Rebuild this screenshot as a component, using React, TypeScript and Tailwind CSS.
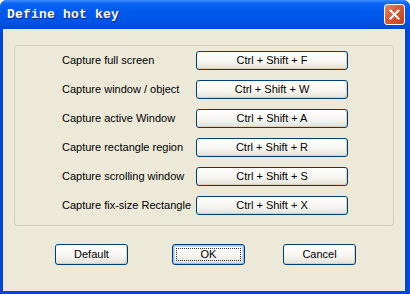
import React from "react";

const rows = [
  ["Capture full screen", "Ctrl + Shift + F"],
  ["Capture window / object", "Ctrl + Shift + W"],
  ["Capture active Window", "Ctrl + Shift + A"],
  ["Capture rectangle region", "Ctrl + Shift + R"],
  ["Capture scrolling window", "Ctrl + Shift + S"],
  ["Capture fix-size Rectangle", "Ctrl + Shift + X"],
];

// XP-style push button
function XpButton({
  children,
  className = "",
  focused = false,
}: {
  children: React.ReactNode;
  className?: string;
  focused?: boolean;
}) {
  return (
    <button
      type="button"
      className={`relative flex items-center justify-center rounded-[3px] border border-[#003C74] bg-[linear-gradient(180deg,#ffffff_0%,#f5f4ef_60%,#e3e1d6_100%)] text-black ${
        focused ? "shadow-[inset_0_0_0_1px_#9dbbef,inset_0_0_0_2px_#c8dbf8]" : "shadow-[inset_-1px_-1px_0_#d6d0c0]"
      } ${className}`}
    >
      {focused && (
        <span className="pointer-events-none absolute inset-[3px] border border-dotted border-[#333]" />
      )}
      {children}
    </button>
  );
}

export default function App() {
  return (
    <div
      className="flex h-[294px] w-[410px] flex-col overflow-hidden rounded-t-[7px] bg-[#0047d8]"
      style={{ fontFamily: '"Liberation Sans", Arial, sans-serif' }}
    >
      {/* title bar */}
      <div className="flex h-[29px] shrink-0 items-center justify-between bg-[linear-gradient(180deg,#3b8cff_0%,#0a64f4_12%,#0058ee_40%,#0055e8_70%,#0048d6_100%)] pl-[7px] pr-[5px]">
        <span
          className="text-[13px] font-bold tracking-[0.2px] text-white [text-shadow:1px_1px_0_#0b2a88]"
          style={{ fontFamily: '"Liberation Mono", "Courier New", monospace' }}
        >
          Define hot key
        </span>
        <div className="flex h-[21px] w-[21px] items-center justify-center rounded-[3px] border border-white bg-[linear-gradient(135deg,#e9866a_0%,#d85a37_45%,#c6401d_100%)]">
          <svg width="11" height="11" viewBox="0 0 11 11">
            <path d="M1.5 1.5 L9.5 9.5 M9.5 1.5 L1.5 9.5" stroke="white" strokeWidth="2" strokeLinecap="square" />
          </svg>
        </div>
      </div>

      {/* client area */}
      <div className="mx-[3px] mb-[3px] mr-[5px] flex flex-1 flex-col bg-[#ece9d8] px-[11px] pt-[16px] text-[11px]">
        <div className="flex flex-col gap-[10px] rounded-[3px] border border-[#d0d0bf] pb-[10px] pl-[47px] pt-[5px]">
          {rows.map(([label, key]) => (
            <div key={label} className="flex items-center">
              <span className="w-[134px] text-black">{label}</span>
              <XpButton className="h-[19px] w-[152px] text-[11px]">{key}</XpButton>
            </div>
          ))}
        </div>

        <div className="mt-[18px] flex pl-[41px]">
          <XpButton className="h-[21px] w-[73px] text-[11px]">Default</XpButton>
          <XpButton focused className="ml-[44px] h-[21px] w-[73px] text-[11px]">
            OK
          </XpButton>
          <XpButton className="ml-[38px] h-[21px] w-[73px] text-[11px]">Cancel</XpButton>
        </div>
      </div>
    </div>
  );
}
